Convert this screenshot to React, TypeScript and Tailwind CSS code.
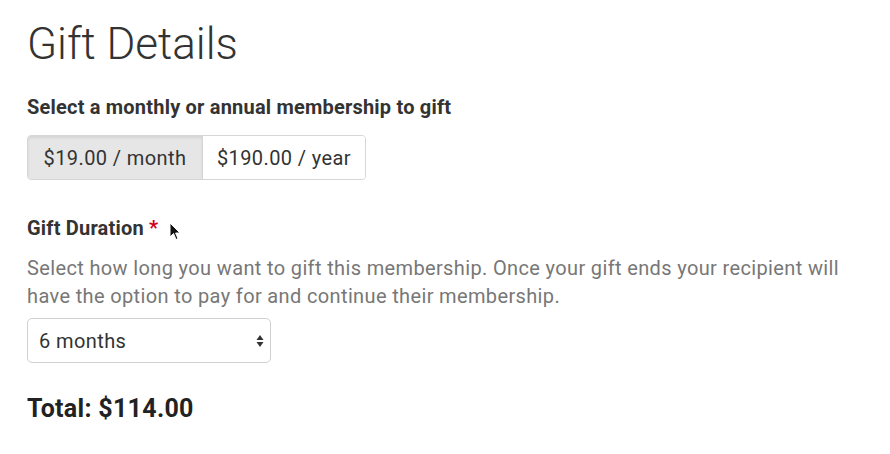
import React from "react";

function Cursor() {
  return (
    <svg width="12" height="19" viewBox="0 0 12 19" className="absolute left-[169px] top-[222px]">
      <path d="M1 1 L1 15 L4.5 11.5 L7 17.5 L9 16.6 L6.6 11 L11 11 Z" fill="#111" stroke="#fff" strokeWidth="1" />
    </svg>
  );
}

export default function App() {
  return (
    <div className="relative h-[454px] w-[890px] bg-white px-[27px] pt-[18px] font-['Roboto',sans-serif] text-[#333]">
      <h1 className="text-[44px] font-light leading-[52px] text-[#333]">Gift Details</h1>

      <p className="mt-[25px] text-[20px] font-bold leading-[24px] tracking-[0.2px] text-[#333]">
        Select a monthly or annual membership to gift
      </p>

      <div className="mt-[16px] inline-flex overflow-hidden rounded-[4px] border border-[#d6d6d6] text-[20px] leading-[24px] tracking-[0.4px] text-[#333]">
        <button className="h-[43px] w-[174px] bg-[#e6e6e6] shadow-[inset_0_2px_3px_rgba(0,0,0,0.08)]">$19.00 / month</button>
        <button className="h-[43px] w-[163px] border-l border-[#d6d6d6] bg-white">$190.00 / year</button>
      </div>

      <p className="mt-[36px] text-[20px] font-bold leading-[24px] tracking-[0.2px] text-[#333]">
        Gift Duration <span className="text-[#d0021b]">*</span>
      </p>

      <p className="mt-[14px] w-[830px] text-[20px] leading-[28px] tracking-[0.36px] text-[#777]">
        Select how long you want to gift this membership. Once your gift ends your recipient will have the option to pay for and continue their membership.
      </p>

      <div className="mt-[8px] flex h-[45px] w-[244px] items-center justify-between rounded-[5px] border border-[#d0d0d0] pl-[11px] pr-[6px] text-[20px] tracking-[0.4px] text-[#333]">
        <span>6 months</span>
        <svg width="8" height="16" viewBox="0 0 8 16">
          <path d="M4 2 L7.5 7 L0.5 7 Z" fill="#333" />
          <path d="M4 14 L7.5 9 L0.5 9 Z" fill="#333" />
        </svg>
      </div>

      <p className="mt-[31px] text-[25px] font-bold leading-[30px] tracking-[0.3px] text-[#222]">Total: $114.00</p>

      <Cursor />
    </div>
  );
}
